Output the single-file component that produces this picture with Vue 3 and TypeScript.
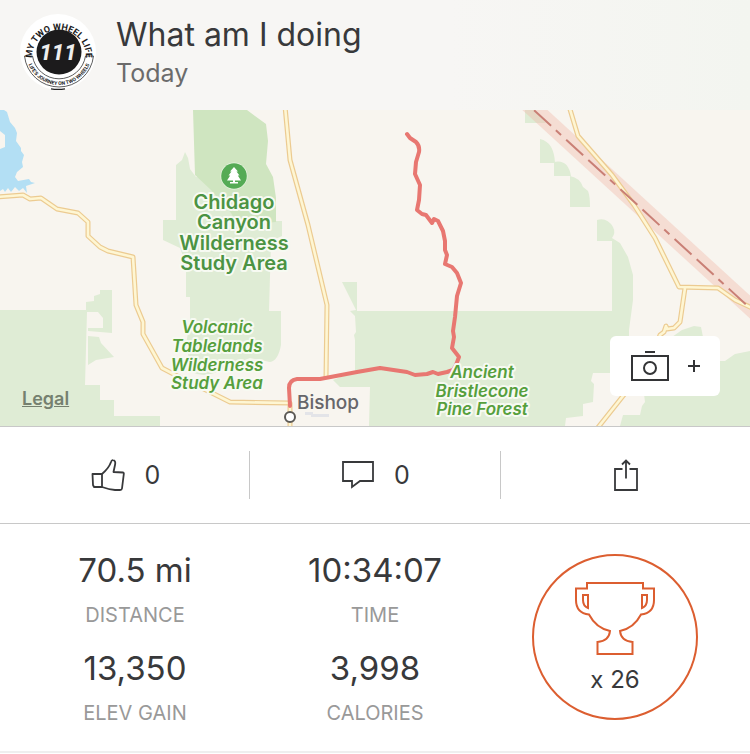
<script setup lang="ts">
import { ref } from 'vue'

interface Stat {
  label: string
  value: string
}

const stats: Stat[] = [
  { label: 'Distance', value: '70.5 mi' },
  { label: 'Time', value: '10:34:07' },
  { label: 'Elev Gain', value: '13,350' },
  { label: 'Calories', value: '3,998' },
]

const likes = ref(0)
const comments = ref(0)
const achievements = ref(26)

const leftRoad =
  'M-4 197 L23 195 L30 199 L41 198 L57 209 L78 213 L88 222 L88 236 L100 247 L108 251 L133 257 L136 305 L143 322 L143 334 L162 368 L185 380 L210 392 L230 402 L290 403 V430'
const centerRoad = 'M285 106 L290 160 L308 225 L327 305 L326 378'
const rightRoad =
  'M569 106 L578 136 L612 175 L634 205 L655 238 L679 287 L718 288 L735 300 L754 309'
const branchRoad =
  'M685 288 L680 322 L674 328 L667 329 L666 326 L664 332 L660 335 L650 362 L623 396 L596 430'
const roads: string[] = [leftRoad, centerRoad, branchRoad, rightRoad]

const route =
  'M407 134 L410 138 L416 142 Q420 146 419 152 L416 162 L415 174 L420 185 L419 200 L417 210 L422 214 L426 215 L432 223 L434 219 L438 221 L443 231 L445 241 L445 250 L447 255 L445 264 L452 267 L457 273 L461 283 L457 296 L455 317 L453 331 L454 337 L452 348 L459 357 L456 365 L453 370 L447 372 L438 374 L433 372 L427 374 L415 375 L407 372 L380 368 L357 372 L320 379 H297 Q289 380 289 388 L290 406'

interface MapLabel {
  kind: string
  x: number
  lines: { text: string; y: number }[]
}

const labels: MapLabel[] = [
  {
    kind: 'park',
    x: 234,
    lines: [
      { text: 'Chidago', y: 209 },
      { text: 'Canyon', y: 229 },
      { text: 'Wilderness', y: 250 },
      { text: 'Study Area', y: 270 },
    ],
  },
  {
    kind: 'region',
    x: 217,
    lines: [
      { text: 'Volcanic', y: 333 },
      { text: 'Tablelands', y: 352 },
      { text: 'Wilderness', y: 371 },
      { text: 'Study Area', y: 389 },
    ],
  },
  {
    kind: 'region',
    x: 482,
    lines: [
      { text: 'Ancient', y: 378 },
      { text: 'Bristlecone', y: 397 },
      { text: 'Pine Forest', y: 415 },
    ],
  },
  { kind: 'town', x: 328, lines: [{ text: 'Bishop', y: 409 }] },
]
</script>

<template>
  <article class="activity">
    <header class="head">
      <svg class="avatar" viewBox="0 0 76 76" role="img" aria-label="My Two Wheel Life 111">
        <defs>
          <path id="arc-top" d="M12 43 A27 27 0 1 1 66 43" />
          <path id="arc-bottom" d="M6 38 A33 33 0 0 0 72 38" />
        </defs>
        <circle cx="38" cy="38" r="38" fill="#fff" />
        <circle cx="39" cy="38" r="22.500" fill="#1c1b1c" />
        <path d="M4.500 42 A34.700 34.700 0 0 0 73.500 42" fill="none" stroke="#333" stroke-width="0.800" />
        <path d="M12.500 42 A26.800 26.800 0 0 0 65.500 42" fill="none" stroke="#333" stroke-width="0.800" />
        <path d="M4.500 42 H12.500 M65.500 42 H73.500" stroke="#333" stroke-width="0.800" />
        <path d="M31 74.800 Q38 76 45 74.800" fill="none" stroke="#222" stroke-width="1.200" />
        <text class="badge-number" x="38" y="46" text-anchor="middle">111</text>
        <text class="badge-top"><textPath href="#arc-top" startOffset="50%" text-anchor="middle">MY TWO WHEEL LIFE</textPath></text>
        <text class="badge-bottom"><textPath href="#arc-bottom" startOffset="50%" text-anchor="middle">LIFE'S JOURNEY ON TWO WHEELS</textPath></text>
      </svg>
      <div class="heading">
        <h1 class="title">What am I doing</h1>
        <p class="date">Today</p>
      </div>
    </header>

    <section class="map" aria-label="Route map">
      <svg class="map-canvas" viewBox="0 110 750 316">
        <rect x="0" y="110" width="750" height="316" fill="#f8f5ef" />
        <g fill="#dfecd5">
          <path d="M185 152 L188 158 L190 169 L196 177 L240 180 L276 221 H282 V236 L271 241 L269 311 H281 V345 Q278 361 270 362 L250 358 L226 367 Q206 380 192 372 L186 345 L190 320 V297 H186 V264 L180 248 L163 240 V220 H176 V165 L182 160 Z" />
          <path d="M0 310 H86 V302 L94 301 V296 L100 294 V290 H112 V333 L88 331 V328 L103 328 V318 L98 312 H87 L85 385 H100 V400 H114 V416 H160 V426 H0 Z" />
          <path d="M88 336 L99 337 L101 343 L114 357 L96 360 L88 365 Z" />
          <path d="M342 282 H357 V311 H612 V238 L620 243 L628 257 L633 275 L633 300 L629 330 V373 H593 L591 381 L594 384 L593 402 L583 404 V416 L566 418 L565 426 H369 L370 387 H340 L333 380 L355 371 V340 L354 335 L356 332 L355 316 L350 311 L356 310 Z" />
          <path d="M672 337 L682 330 L694 326 L701 327 L703 337 L720 361 L725 361 L735 354 L750 351 V426 H620 L623 415 L640 415 L642 406 L645 402 L644 394 Z" />
          <path d="M525 110 H534 L546 123 H525 Z" />
          <path d="M540 139 Q554 142 555 163 H540 Z M554 162 Q568 159 571 176 H554 Z M570 176 Q580 178 583 187 L588 191 Q590 196 590 207 H570 Z M597 220 Q607 217 613 227 Q616 233 612 238 V241 H597 Z" />
        </g>
        <path d="M193 110 H247 L266 124 L268 141 L266 164 L273 177 L276 198 V222 L238 226 L231 213 L211 190 L195 175 Z" fill="#cfe5c0" />
        <path d="M0 110 H4 L7 112 L10 122 L15 128 L17 133 L16 141 L21 148 L21 151 L24 155 L22 162 L23 167 L17 172 L15 177 L18 181 L29 179 L31 182 L35 183 L26 186 L27 193 L23 188 L19 191 L15 187 L11 192 L8 188 L5 192 L3 189 L0 191 V149 L5 147 L5 135 L0 131 Z" fill="#b3dff4" />
        <path d="M305 412 H313 V414 H329 V417 H311 V415 H305 Z" fill="#e3e4e8" />
        <path d="M500 78 L775 330" stroke="#f0b9ab" stroke-opacity="0.400" stroke-width="17" />

        <g fill="none" stroke-linejoin="round">
          <path v-for="road in roads" :key="road" :d="road" stroke="#eccb91" stroke-width="5" />
          <path v-for="road in roads" :key="road + 'fill'" :d="road" stroke="#fef6d3" stroke-width="2.600" />
        </g>
        <path d="M512 90 L775 331" stroke="#c97f75" stroke-width="2" stroke-dasharray="23 7 23 6.500 7 7" />
        <path :d="route" fill="none" stroke="#e87771" stroke-width="4" stroke-linejoin="round" stroke-linecap="round" />
        <circle cx="290" cy="417" r="5" fill="#fff" stroke="#5b5955" stroke-width="2" />

        <circle cx="234" cy="176" r="13.500" fill="#e8f3e0" />
        <circle cx="234" cy="176" r="12.800" fill="#55ab55" />
        <path d="M234 167 L238 171.500 H236.500 L239.500 175.500 H237.800 L241 180.500 H235 V182 H238 V183.500 H230 V182 H233 V180.500 H227 L230.200 175.500 H228.500 L231.500 171.500 H230 Z" fill="#fff" />

        <text v-for="label in labels" :key="label.lines[0].text + label.x" :class="label.kind" text-anchor="middle">
          <tspan v-for="line in label.lines" :key="line.text" :x="label.x" :y="line.y">{{ line.text }}</tspan>
        </text>
      </svg>
      <a class="legal" href="#legal">Legal</a>
      <button class="add-photo" type="button" aria-label="Add photo">
        <svg width="38" height="32" viewBox="0 0 38 32" fill="none" stroke="#333436" stroke-width="2">
          <path d="M14 2 H24" />
          <rect x="1" y="6" width="36" height="24" />
          <circle cx="19" cy="18" r="6" />
        </svg>
        <svg width="12" height="12" viewBox="0 0 12 12" stroke="#333436" stroke-width="2">
          <path d="M6 0 V12 M0 6 H12" />
        </svg>
      </button>
    </section>

    <nav class="actions" aria-label="Activity actions">
      <button class="action" type="button" aria-label="Like" @click="likes++">
        <svg width="34" height="32" viewBox="0 0 34 32" fill="none" stroke="#38393b" stroke-width="1.800" stroke-linejoin="round">
          <path d="M11 15 Q18 9 20 3 Q20.500 1 22 1.200 Q25 1.500 24 6 L22.500 13 L32 13.500 Q33 13.700 32.800 15 L31 29.500 Q30.800 31 29 31 H24 Q18 30.500 11 28" />
          <path d="M1.500 15 H11 V28 H3 L2 26 Z" />
        </svg>
        <span class="count">{{ likes }}</span>
      </button>
      <button class="action" type="button" aria-label="Comment" @click="comments++">
        <svg width="32" height="28" viewBox="0 0 32 28" fill="none" stroke="#38393b" stroke-width="1.800">
          <path d="M1 1 H31 V20 H18 L10 26 V20 H1 Z" />
        </svg>
        <span class="count">{{ comments }}</span>
      </button>
      <button class="action" type="button" aria-label="Share">
        <svg width="24" height="32" viewBox="0 0 24 32" fill="none" stroke="#38393b" stroke-width="1.800">
          <path d="M8.500 10 H1 V31 H23 V10 H15.500" />
          <path d="M12 19.500 V2 M8 5.500 L12 1.500 L16 5.500" />
        </svg>
      </button>
    </nav>

    <section class="summary">
      <dl class="stats">
        <div v-for="stat in stats" :key="stat.label" class="stat">
          <dt class="label">{{ stat.label }}</dt>
          <dd class="value">{{ stat.value }}</dd>
        </div>
      </dl>
      <div class="trophies">
        <button class="trophy" type="button" aria-label="Achievements">
          <svg width="80" height="74" viewBox="0 0 80 74" fill="none" stroke="#dc5e30" stroke-width="2">
            <path d="M12 1 H68 V6.500 H79 V18 Q79 31 66 32.500 Q59 46 45 49 Q46 59 57.500 60 V72 H22.500 V60 Q34 59 35 49 Q21 46 14 32.500 Q1 31 1 18 V6.500 H12 Z" />
            <path d="M8 13 H13 V26 Q8 24 8 18 Z M72 13 H67 V26 Q72 24 72 18 Z" />
          </svg>
          <span class="trophy-count">x {{ achievements }}</span>
        </button>
      </div>
    </section>
  </article>
</template>

<style>
body {
  background: #fff;
}
</style>

<style scoped>
.activity {
  font-family: Inter, 'Liberation Sans', sans-serif;
  color: #38393b;
  border-bottom: 2px solid #efefef;
}

.head {
  display: flex;
  align-items: flex-start;
  gap: 20px;
  padding: 14px 20px 20px;
  background: linear-gradient(90deg, #f7f6f4 60%, #f3f5f0);
}

.avatar {
  flex: none;
  width: 76px;
  height: 76px;
}

.badge-number {
  font: italic 800 22px 'Liberation Sans Narrow', Roboto, sans-serif;
  fill: #eee;
}

.badge-top {
  font: 700 9px 'Liberation Sans Narrow', Roboto, sans-serif;
  fill: #1c1b1c;
}

.badge-bottom {
  font: 700 5px 'Liberation Sans Narrow', Roboto, sans-serif;
  fill: #1c1b1c;
}

.heading {
  display: flex;
  flex-direction: column;
}

.title {
  margin: 0;
  font-size: 32px;
  font-weight: 400;
  line-height: 42px;
}

.date {
  margin: 0;
  font-size: 25px;
  line-height: 34px;
  color: #6b6b6b;
}

.map {
  position: relative;
  border-bottom: 1px solid #c8c8c8;
}

.map-canvas {
  display: block;
  width: 100%;
  height: auto;
}

.park {
  font-size: 20px;
  font-weight: 600;
  fill: #4b9343;
  stroke: #f7faf2;
  stroke-width: 4px;
  stroke-linejoin: round;
  paint-order: stroke;
}

.region {
  font-size: 17px;
  font-style: italic;
  font-weight: 600;
  fill: #569f3d;
  stroke: #f7faf2;
  stroke-width: 4px;
  stroke-linejoin: round;
  paint-order: stroke;
}

.town {
  font-size: 19px;
  font-weight: 500;
  fill: #66666a;
  stroke: #f8f5ef;
  stroke-width: 3px;
  paint-order: stroke;
}

.legal {
  position: absolute;
  left: 22px;
  bottom: 16px;
  font-size: 18px;
  font-weight: 600;
  line-height: 22px;
  color: #75806f;
}

.add-photo {
  position: absolute;
  right: 30px;
  bottom: 30px;
  display: flex;
  align-items: center;
  justify-content: center;
  gap: 19px;
  width: 110px;
  height: 60px;
  padding: 0;
  border: 0;
  border-radius: 6px;
  background: #fff;
}

.actions {
  display: grid;
  grid-template-columns: repeat(3, 1fr);
  padding: 24px 0;
  border-bottom: 1px solid #c8c8c8;
}

.action {
  display: flex;
  align-items: center;
  justify-content: center;
  gap: 20px;
  height: 48px;
  padding: 0 0 0 2px;
  border: 0;
  background: none;
  font: inherit;
  color: inherit;
}

.action:first-child {
  border-right: 1px solid #c8c8c8;
}

.action:last-child {
  padding: 0;
  border-left: 1px solid #c8c8c8;
}

.count {
  font-size: 25px;
  line-height: 32px;
}

.summary {
  display: grid;
  grid-template-columns: 2fr 1fr;
  align-items: start;
  padding: 26px 15px;
}

.stats {
  display: grid;
  grid-template-columns: 1fr 1fr;
  row-gap: 21px;
  margin: 0;
}

.stat {
  display: flex;
  flex-direction: column-reverse;
  align-items: center;
  gap: 13px;
}

.value {
  margin: 0;
  font-size: 33px;
  line-height: 40px;
}

.label {
  font-size: 20px;
  line-height: 24px;
  text-transform: uppercase;
  color: #999;
}

.trophies {
  display: flex;
  justify-content: center;
  padding-top: 4px;
}

.trophy {
  display: flex;
  flex-direction: column;
  align-items: center;
  gap: 8px;
  box-sizing: border-box;
  width: 166px;
  height: 166px;
  padding: 26px 0 0;
  border: 2px solid #dc5e30;
  border-radius: 50%;
  background: #fff;
  font: inherit;
  color: inherit;
}

.trophy-count {
  font-size: 24px;
  line-height: 32px;
}
</style>
